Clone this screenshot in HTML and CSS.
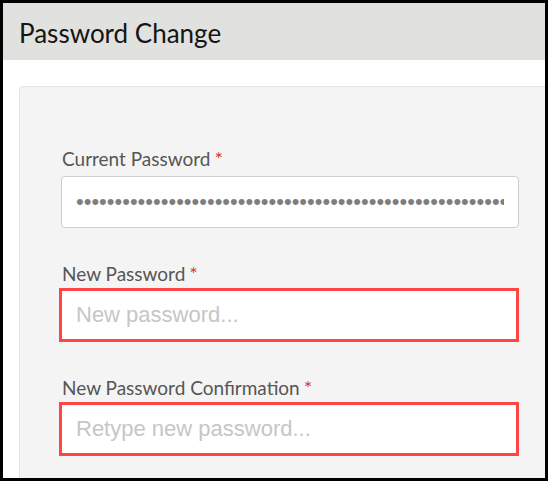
FILE: index.html
```html
<!DOCTYPE html>
<html lang="en">
<head>
<meta charset="utf-8">
<title>Password Change</title>
<link rel="stylesheet" href="styles.css">
</head>
<body>
<div class="frame">
  <header class="header">
    <h1 class="title">Password Change</h1>
  </header>
  <main class="card">
    <div class="field">
      <label class="label" for="current">Current Password<span class="req">*</span></label>
      <input class="input" id="current" type="password" value="aaaaaaaaaaaaaaaaaaaaaaaaaaaaaaaaaaaaaaaaaaaaaaaaaaaaaaaaaaaaaaaaaaaaaa">
    </div>
    <div class="field">
      <label class="label" for="newpw">New Password<span class="req">*</span></label>
      <input class="input input-error" id="newpw" type="password" placeholder="New password...">
    </div>
    <div class="field">
      <label class="label" for="confirm">New Password Confirmation<span class="req">*</span></label>
      <input class="input input-error" id="confirm" type="password" placeholder="Retype new password...">
    </div>
  </main>
</div>
</body>
</html>
```
FILE: styles.css
```css
html, body {
  margin: 0;
  padding: 0;
  background: #000;
}
body {
  padding: 3px;
  height: 481px;
  box-sizing: border-box;
  overflow: hidden;
}
.frame {
  background: #fff;
  height: 475px;
  overflow: hidden;
}
.header {
  height: 57px;
  background: #e1e1df;
  display: flex;
  align-items: center;
  padding-left: 16px;
}
.title {
  margin: 0;
  font-family: Lato, "Open Sans", sans-serif;
  font-weight: 400;
  font-size: 26px;
  color: #141414;
  line-height: 1;
  padding-top: 2px;
}
.card {
  display: block;
  margin: 26px -20px 0 16px;
  background: #f4f4f4;
  border: 1px solid #e4e4e4;
  border-radius: 4px;
  padding: 58px 0 40px 42px;
  min-height: 400px;
}
.field {
  display: flex;
  flex-direction: column;
  align-items: flex-start;
}
.field + .field {
  margin-top: 32px;
}
.label {
  font-family: Lato, "Open Sans", sans-serif;
  font-size: 19px;
  line-height: 24px;
  color: #565656;
  padding-top: 1px;
  margin-bottom: 5px;
}
.req {
  color: #d9383a;
  margin-left: 4px;
  font-size: 20px;
}
.input {
  box-sizing: border-box;
  width: 458px;
  height: 52px;
  margin: 0 0 0 -1px;
  border: 1px solid #cfcfcf;
  border-radius: 4px;
  background: #fff;
  padding: 0 14px;
  font-family: "Liberation Sans", Arial, sans-serif;
  font-size: 22px;
  color: #7e7e7e;
  outline: none;
}
.input::placeholder {
  color: #c6c6c6;
}
.input-error {
  width: 460px;
  height: 54px;
  margin: -3px 0 0 -3px;
  border: 3px solid #ff4444;
  border-radius: 0;
  padding-left: 14px;
}
```
